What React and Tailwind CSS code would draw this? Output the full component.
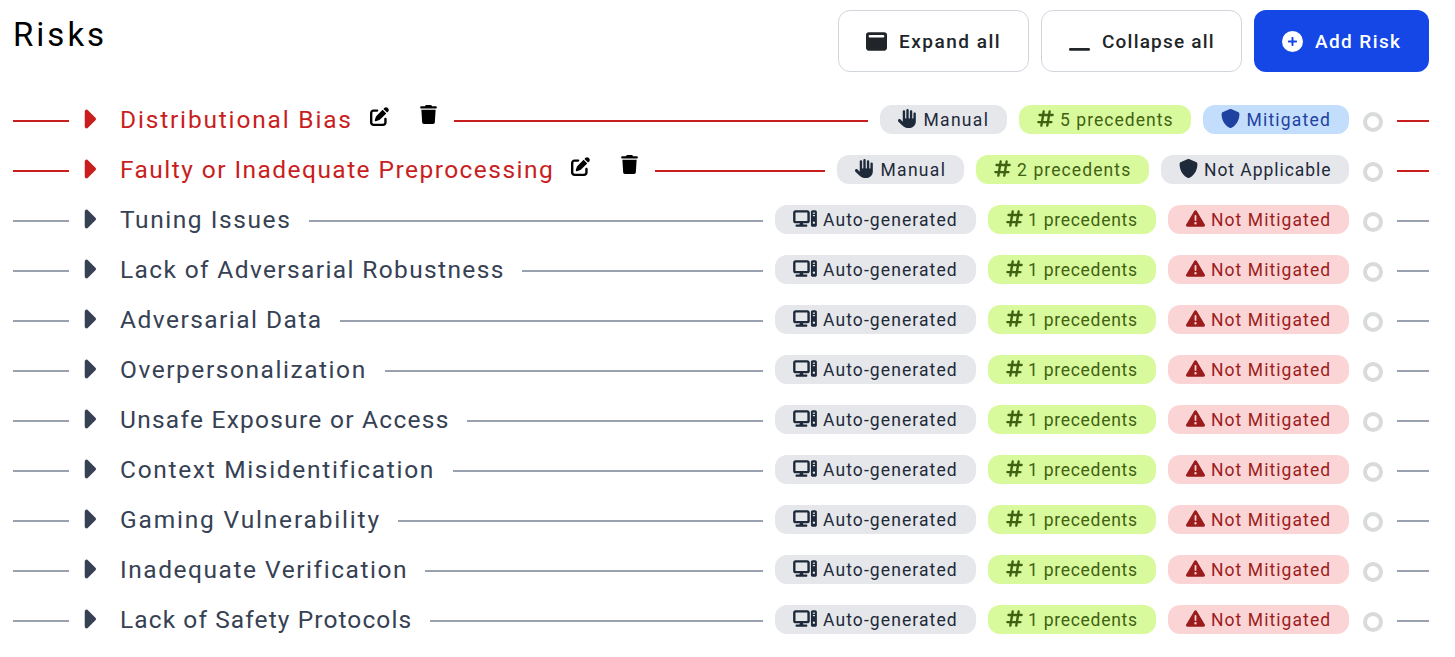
import React from "react";
import {
  FaCaretRight,
  FaCirclePlus,
  FaComputer,
  FaHand,
  FaHashtag,
  FaPenToSquare,
  FaShield,
  FaTrash,
  FaTriangleExclamation,
  FaWindowMaximize,
  FaWindowMinimize,
} from "react-icons/fa6";

const manual = { Icon: FaHand, text: "Manual", box: "w-[127px] bg-gray-200 text-gray-800", icon: "w-[19px] h-[19px]", track: "tracking-[1.3px]", gap: "gap-[6.5px]" };
const auto = { Icon: FaComputer, text: "Auto-generated", box: "w-[201px] bg-gray-200 text-gray-800", icon: "w-6 h-[19px]", track: "tracking-[1.1px]", gap: "gap-1.5" };
const precedents = (n, box, gap, track) => ({ Icon: FaHashtag, text: `${n} precedents`, box, icon: "w-[17px] h-[19px]", track, gap });
const one = precedents(1, "w-[168px] bg-[#d9f99d] text-[#3f6212]", "gap-[5px]", "tracking-[0.73px]");
const mitigated = { Icon: FaShield, text: "Mitigated", box: "w-[146px] bg-[#c3ddfd] text-[#1e429f]", icon: "w-[19px] h-[19px]", track: "tracking-[1.2px]", gap: "gap-[6.5px]" };
const notApplicable = { Icon: FaShield, text: "Not Applicable", box: "w-[188px] bg-gray-200 text-gray-800", icon: "w-[19px] h-[19px]", track: "tracking-[0.95px]", gap: "gap-1.5" };
const notMitigated = { Icon: FaTriangleExclamation, text: "Not Mitigated", box: "w-[181px] bg-[#fbd5d5] text-[#9b1c1c]", icon: "w-[19px] h-[19px]", track: "tracking-[1.07px]", gap: "gap-1.5" };
const generated = [auto, one, notMitigated];

const risks = [
  { title: "Distributional Bias", size: "w-[231px] tracking-[1.82px]", edited: true, badges: [manual, precedents(5, "w-[172px] bg-[#d9f99d] text-[#3f6212]", "gap-1.5", "tracking-[1.05px]"), mitigated] },
  { title: "Faulty or Inadequate Preprocessing", size: "w-[432px] tracking-[1.45px]", edited: true, badges: [manual, precedents(2, "w-[173px] bg-[#d9f99d] text-[#3f6212]", "gap-1.5", "tracking-[1.1px]"), notApplicable] },
  { title: "Tuning Issues", size: "w-[171px] tracking-[1.57px]", badges: generated },
  { title: "Lack of Adversarial Robustness", size: "w-[384px] tracking-[1.37px]", badges: generated },
  { title: "Adversarial Data", size: "w-[202px] tracking-[1.47px]", badges: generated },
  { title: "Overpersonalization", size: "w-[247px] tracking-[1.55px]", badges: generated },
  { title: "Unsafe Exposure or Access", size: "w-[329px] tracking-[1.26px]", badges: generated },
  { title: "Context Misidentification", size: "w-[315px] tracking-[1.68px]", badges: generated },
  { title: "Gaming Vulnerability", size: "w-[260px] tracking-[1.82px]", badges: generated },
  { title: "Inadequate Verification", size: "w-[287px] tracking-[1.54px]", badges: generated },
  { title: "Lack of Safety Protocols", size: "w-[292px] tracking-[1.1px]", badges: generated },
];

function Badge({ badge }) {
  const { Icon, text, box, icon, track, gap } = badge;
  return (
    <span className={`flex h-[29px] shrink-0 items-center rounded-xl pl-[18px] text-[17.5px] ${gap} ${box}`}>
      <Icon className={`mb-0.5 shrink-0 ${icon}`} preserveAspectRatio="xMidYMid meet" />
      <span className={`whitespace-nowrap pt-0.5 ${track}`}>{text}</span>
    </span>
  );
}

function RiskRow({ risk }) {
  const line = risk.edited ? "bg-[#c81e1e]" : "bg-gray-400";
  const color = risk.edited ? "text-[#c81e1e]" : "text-gray-700";
  return (
    <div className="flex h-[50px] items-center">
      <span className={`mt-[3px] h-0.5 w-14 shrink-0 ${line}`} />
      <FaCaretRight className={`ml-[10px] h-[30px] w-[19px] shrink-0 ${color}`} />
      <span className={`ml-[22px] shrink-0 whitespace-nowrap pt-px text-[24.5px] leading-8 ${risk.size} ${color}`}>{risk.title}</span>
      {risk.edited && (
        <span className="ml-[18.5px] flex shrink-0 items-center text-black">
          <FaPenToSquare className="mb-[5px] h-[19px] w-[19px]" />
          <FaTrash className="mb-[9px] ml-[31px] h-[19px] w-[17px]" />
        </span>
      )}
      <span className={`mt-[3px] h-0.5 grow ${risk.edited ? "ml-[17.5px]" : "ml-[18px]"} ${line}`} />
      <div className="ml-3 flex shrink-0 gap-3">
        {risk.badges.map((b) => (
          <Badge key={b.text} badge={b} />
        ))}
      </div>
      <span className="ml-3.5 mt-[5px] h-5 w-5 shrink-0 rounded-full border-4 border-[#d9dadc]" />
      <span className={`ml-3.5 mt-[3px] h-0.5 w-8 shrink-0 ${line}`} />
    </div>
  );
}

export default function App() {
  return (
    <main className="h-[657px] w-[1455px] overflow-hidden bg-white pl-[13px] pr-[26px] pt-2.5 font-['Roboto',sans-serif]">
      <header className="flex h-[62px] justify-between">
        <h1 className="mt-0.5 text-[33px] leading-[46px] tracking-[3px] text-black">Risks</h1>
        <div className="flex gap-3 text-[19px] font-medium text-[#212529]">
          <button className="flex w-[191px] items-center rounded-xl border border-gray-300 pl-[27px]">
            <FaWindowMaximize className="mr-3 h-[21px] w-[21px]" />
            <span className="whitespace-nowrap pt-0.5 tracking-[1.5px]">Expand all</span>
          </button>
          <button className="flex w-[201px] items-center rounded-xl border border-gray-300 pl-[27px]">
            <FaWindowMinimize className="mr-3 h-[21px] w-[21px]" />
            <span className="whitespace-nowrap pt-0.5 tracking-[1.2px]">Collapse all</span>
          </button>
          <button className="flex w-[175px] items-center rounded-xl bg-[#1447e6] pl-7 text-white">
            <FaCirclePlus className="mr-3 h-[21px] w-[21px]" />
            <span className="whitespace-nowrap pt-0.5 tracking-[1.4px]">Add Risk</span>
          </button>
        </div>
      </header>
      <section className="mt-[22px]">
        {risks.map((risk) => (
          <RiskRow key={risk.title} risk={risk} />
        ))}
      </section>
    </main>
  );
}
